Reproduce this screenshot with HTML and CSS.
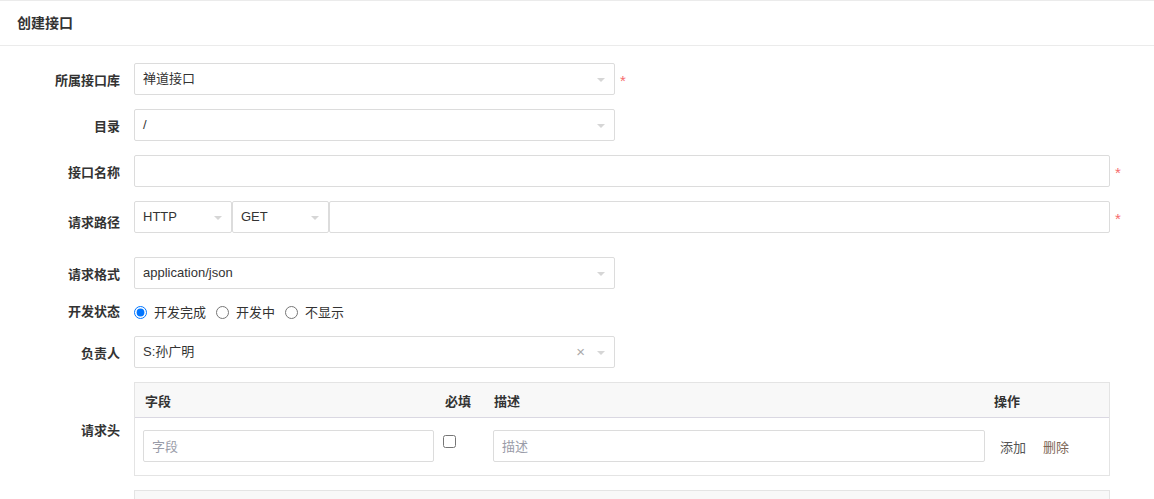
FILE: index.html
```html
<!DOCTYPE html>
<html lang="zh-CN">
<head>
    <meta charset="UTF-8">
    <meta name="viewport" content="width=device-width, initial-scale=1.0">
    <title>创建接口</title>
    <link rel="stylesheet" href="styles.css">
</head>
<body>
    <div class="panel">
        <div class="panel-head">创建接口</div>

        <div class="panel-body">
            <div class="form-row">
                <label class="form-label">所属接口库</label>
                <div class="select narrow">禅道接口<span class="caret"></span></div>
                <span class="required">*</span>
            </div>

            <div class="form-row">
                <label class="form-label">目录</label>
                <div class="select narrow">/<span class="caret"></span></div>
            </div>

            <div class="form-row">
                <label class="form-label">接口名称</label>
                <input class="input wide" type="text">
                <span class="required">*</span>
            </div>

            <div class="form-row path-row">
                <label class="form-label">请求路径</label>
                <div class="input-group">
                    <div class="select protocol">HTTP<span class="caret"></span></div>
                    <div class="select method">GET<span class="caret"></span></div>
                    <input class="input path" type="text">
                </div>
                <span class="required">*</span>
            </div>

            <div class="form-row">
                <label class="form-label">请求格式</label>
                <div class="select narrow">application/json<span class="caret"></span></div>
            </div>

            <div class="form-row radio-row">
                <label class="form-label">开发状态</label>
                <div class="radios">
                    <label class="radio"><input type="radio" name="status" checked>开发完成</label>
                    <label class="radio"><input type="radio" name="status">开发中</label>
                    <label class="radio"><input type="radio" name="status">不显示</label>
                </div>
            </div>

            <div class="form-row">
                <label class="form-label">负责人</label>
                <div class="select narrow">S:孙广明<span class="clear">&times;</span><span class="caret"></span></div>
            </div>

            <div class="form-row">
                <label class="form-label">请求头</label>
                <div class="params">
                    <div class="params-head">
                        <div class="col-name">字段</div>
                        <div class="col-req">必填</div>
                        <div class="col-desc">描述</div>
                        <div class="col-act">操作</div>
                    </div>
                    <div class="params-body">
                        <div class="col-name"><input class="input" type="text" placeholder="字段"></div>
                        <div class="col-req"><input type="checkbox"></div>
                        <div class="col-desc"><input class="input" type="text" placeholder="描述"></div>
                        <div class="col-act"><a class="link-add">添加</a><a class="link-del">删除</a></div>
                    </div>
                </div>
            </div>

            <div class="form-row">
                <label class="form-label"></label>
                <div class="params">
                    <div class="params-head"></div>
                </div>
            </div>
        </div>
    </div>
</body>
</html>
```

FILE: styles.css
```css
:root {
    --border: #dcdcdc;
    --text: #333333;
    --muted: #999999;
    --required: #f66b6b;
}

body {
    margin: 0;
    font-family: 'Liberation Sans', 'Noto Sans CJK SC', sans-serif;
    font-size: 13px;
    color: var(--text);
    background: #fff;
}

.panel {
    border-top: 1px solid #ebebeb;
}

.panel-head {
    height: 44px;
    line-height: 44px;
    padding-left: 17px;
    font-size: 14px;
    font-weight: bold;
    border-bottom: 1px solid #ebebeb;
}

.panel-body {
    padding-top: 17px;
}

.form-row {
    display: flex;
    align-items: center;
    margin-bottom: 14px;
}

.form-label {
    width: 120px;
    padding-right: 14px;
    flex-shrink: 0;
    text-align: right;
    font-weight: bold;
}

.path-row {
    margin-bottom: 24px;
}

.path-row .form-label {
    padding-top: 9px;
}

.select,
.input {
    box-sizing: border-box;
    height: 32px;
    border: 1px solid var(--border);
    border-radius: 2px;
    background: #fff;
    font: inherit;
    color: var(--text);
}

.select {
    position: relative;
    line-height: 30px;
    padding-left: 8px;
}

.input {
    padding: 0 8px;
    outline: none;
}

.input::placeholder {
    color: #9a9ca8;
}

.narrow {
    width: 481px;
}

.wide {
    width: 976px;
}

.caret {
    position: absolute;
    right: 9px;
    top: 14px;
    border-left: 4px solid transparent;
    border-right: 4px solid transparent;
    border-top: 4px solid #d6d6d6;
}

.clear {
    position: absolute;
    right: 29px;
    top: 0;
    color: #aaa;
    font-size: 15px;
}

.required {
    margin-left: 5px;
    padding-top: 3px;
    color: var(--required);
    font-size: 15px;
}

.input-group {
    display: flex;
    width: 976px;
}

.protocol {
    width: 98px;
}

.method {
    width: 97px;
}

.path {
    flex: 1;
}

.radio-row .form-label,
.radios {
    line-height: 19px;
}

.radio-row .form-label {
    margin-top: -2px;
}

.radios {
    display: flex;
    gap: 10px;
}

.radio {
    display: flex;
    align-items: center;
    gap: 7px;
}

.radio input {
    margin: 0;
    width: 13px;
    height: 13px;
}

.params {
    box-sizing: border-box;
    width: 976px;
    border: 1px solid #e4e4e4;
}

.params-head,
.params-body {
    display: grid;
    grid-template-columns: 302px 50px 501px 1fr;
    align-items: center;
}

.params-head {
    height: 34px;
    background: #f8f8f8;
    border-bottom: 1px solid #dad8e2;
    font-weight: bold;
}

.params-head .col-name { padding-left: 10px; }
.params-head .col-req { padding-left: 8px; }
.params-head .col-desc { padding-left: 7px; }
.params-head .col-act { padding-left: 6px; }

.params-body {
    padding: 12px 0 13px;
}

.params-body .col-name { padding: 0 3px 0 8px; }
.params-body .col-req { padding-left: 6px; align-self: start; padding-top: 5px; }
.params-body .col-desc { padding: 0 3px 0 6px; }
.params-body .col-act { padding-left: 12px; }

.params-body .input {
    width: 100%;
}

.params-body input[type="checkbox"] {
    margin: 0;
    width: 13px;
    height: 13px;
}

.link-add {
    color: #555;
    margin-right: 17px;
}

.link-del {
    color: #7d6656;
}
```
